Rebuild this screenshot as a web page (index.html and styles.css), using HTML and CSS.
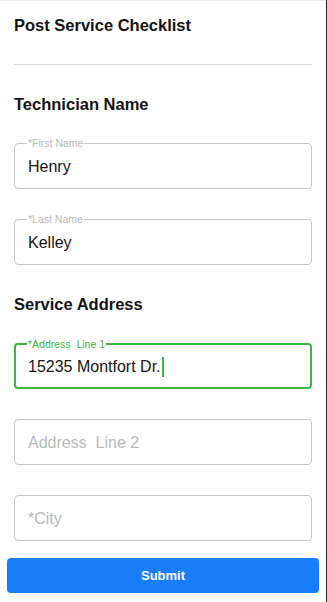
FILE: index.html
```html
<!DOCTYPE html>
<html lang="en">
<head>
<meta charset="utf-8">
<title>Post Service Checklist</title>
<link rel="stylesheet" href="styles.css">
</head>
<body>
<div class="page">
  <h1 class="title">Post Service Checklist</h1>
  <hr class="divider">
  <h2 class="section">Technician Name</h2>
  <div class="field">
    <span class="label">*First Name</span>
    <span class="value">Henry</span>
  </div>
  <div class="field">
    <span class="label">*Last Name</span>
    <span class="value">Kelley</span>
  </div>
  <h2 class="section">Service Address</h2>
  <div class="field focused">
    <span class="label">*Address&nbsp; Line 1</span>
    <span class="value">15235 Montfort Dr.<span class="caret"></span></span>
  </div>
  <div class="field">
    <span class="placeholder">Address&nbsp; Line 2</span>
  </div>
  <div class="field">
    <span class="placeholder">*City</span>
  </div>
  <button class="submit" type="button">Submit</button>
</div>
</body>
</html>
```
FILE: styles.css
```css
* { box-sizing: border-box; }
html, body { margin: 0; padding: 0; }
body {
  background: #1e1e1e;
  font-family: "Liberation Sans", Arial, sans-serif;
  color: #141414;
}
.page {
  width: 326px;
  height: 602px;
  background: #fff;
  padding: 0 14px;
  display: flex;
  flex-direction: column;
  border-top: 1px solid #ececec;
}
.title {
  margin: 14px 0 0;
  font-size: 16.5px;
  line-height: 20px;
  font-weight: 700;
}
.divider {
  margin: 29px 0 0;
  border: 0;
  height: 1px;
  background: #dcdcdc;
  width: 298px;
}
.section {
  margin: 29px 0 0;
  font-size: 16.5px;
  line-height: 20px;
  font-weight: 700;
}
.field {
  position: relative;
  width: 298px;
  height: 46px;
  margin-top: 30px;
  border: 1px solid #c8c8c8;
  border-radius: 4px;
  padding: 1px 13px 0;
  display: flex;
  align-items: center;
  font-size: 16px;
  line-height: 20px;
}
.section + .field { margin-top: 29px; }
.label {
  position: absolute;
  top: -7px;
  left: 12px;
  padding: 0 1px;
  background: #fff;
  font-size: 10.5px;
  line-height: 12px;
  color: #b8b8b8;
}
.value { color: #161616; white-space: nowrap; }
.placeholder { color: #b9b9b9; }
.field.focused {
  border: 2px solid #3cb83c;
  padding-left: 12px;
}
.field.focused .label {
  left: 11px;
  color: #3cb83c;
}
.caret {
  display: inline-block;
  width: 2px;
  height: 20px;
  margin-left: 1px;
  vertical-align: -5px;
  background: #3cb83c;
}
.submit {
  margin: 17px -7px 0;
  width: 312px;
  height: 35px;
  border: 0;
  border-radius: 4px;
  background: #1a7dfa;
  color: #fff;
  font-family: "Liberation Sans", Arial, sans-serif;
  font-size: 13px;
  font-weight: 700;
  padding: 0;
}
```
